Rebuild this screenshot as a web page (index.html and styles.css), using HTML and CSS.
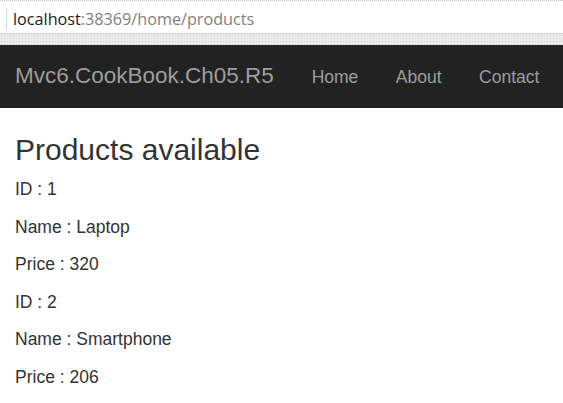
FILE: index.html
```html
<!DOCTYPE html>
<html>
<head>
<meta charset="utf-8">
<title>Products</title>
<link rel="stylesheet" href="styles.css">
</head>
<body>
<div class="chrome">
  <div class="addr">
    <span class="caret"></span>
    <span class="url"><span class="host">localhost</span><span class="rest">:38369/home/products</span></span>
  </div>
</div>
<div class="strip"></div>
<nav class="navbar">
  <a class="brand" href="#">Mvc6.CookBook.Ch05.R5</a>
  <a class="link" href="#">Home</a>
  <a class="link" href="#">About</a>
  <a class="link" href="#">Contact</a>
</nav>
<main class="content">
  <h2 class="title">Products available</h2>
  <p class="row">ID : 1</p>
  <p class="row">Name : Laptop</p>
  <p class="row">Price : 320</p>
  <p class="row">ID : 2</p>
  <p class="row">Name : Smartphone</p>
  <p class="row">Price : 206</p>
</main>
</body>
</html>
```
FILE: styles.css
```css
html, body {
  margin: 0;
  padding: 0;
  background: #fff;
  font-family: "Liberation Sans", Arial, sans-serif;
  color: #333;
  overflow: hidden;
}

.chrome {
  height: 32px;
  border-top: 1px dotted #c4c4c4;
  border-bottom: 1px solid #d6d6d6;
  background: #fff;
}

.addr {
  display: flex;
  align-items: flex-start;
  padding: 8px 0 0 6px;
}

.caret {
  width: 1px;
  height: 22px;
  margin-top: -1px;
  margin-right: 6px;
  background: #d4d4d4;
}

.url {
  font-family: "Open Sans", "Noto Sans", sans-serif;
  font-size: 16.2px;
  line-height: 20px;
  white-space: nowrap;
}

.host { color: #1b1b1b; }
.rest { color: #808080; }

.strip {
  height: 11px;
  background-color: #ebebeb;
  background-image:
    radial-gradient(circle, #d2d2d2 0.8px, transparent 1px);
  background-size: 3px 3px;
}

.navbar {
  display: flex;
  align-items: baseline;
  height: 63px;
  box-sizing: border-box;
  padding: 18px 0 0 15px;
  background: #222;
}

.navbar a {
  text-decoration: none;
  color: #9d9d9d;
}

.brand {
  font-size: 22.5px;
  line-height: 25px;
  padding-right: 19px;
}

.link {
  font-size: 17.5px;
  line-height: 25px;
  padding: 0 18.75px;
}

.content {
  padding: 0 15px;
}

.title {
  font-size: 30px;
  font-weight: normal;
  line-height: 33px;
  margin: 25px 0 11px;
  color: #333;
}

.row {
  font-size: 17.5px;
  line-height: 25px;
  margin: 0 0 12.5px;
}
```
